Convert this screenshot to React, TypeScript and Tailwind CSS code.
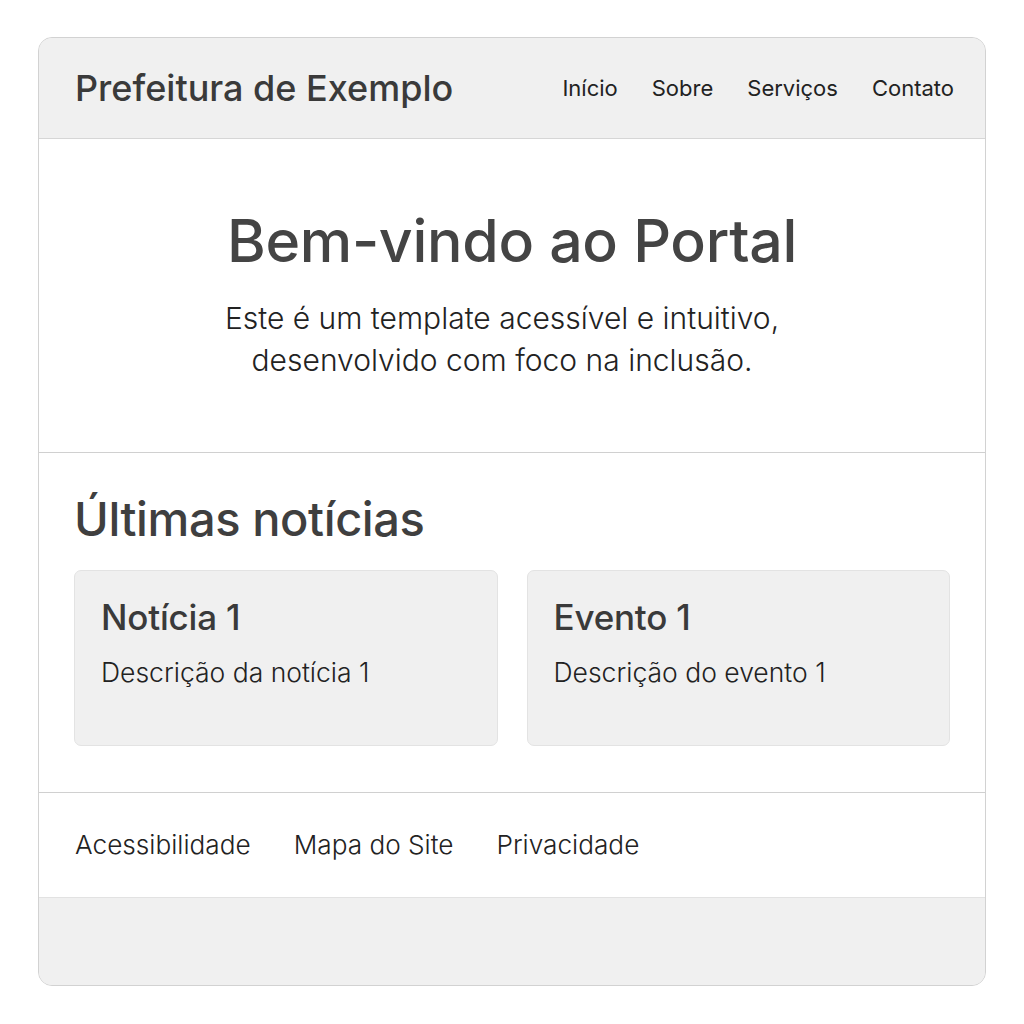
const navLinks = ["Início", "Sobre", "Serviços", "Contato"];

const cards = [
  { title: "Notícia 1", text: "Descrição da notícia 1" },
  { title: "Evento 1", text: "Descrição do evento 1" },
];

const footerLinks = ["Acessibilidade", "Mapa do Site", "Privacidade"];

export default function App() {
  return (
    <div className="min-h-screen bg-white px-[38px] pt-[37px] pb-[38px] font-['Inter',sans-serif]">
      <div className="flex h-[949px] flex-col overflow-hidden rounded-[14px] border border-[#d2d2d2] bg-[#f0f0f0]">
        <header className="flex h-[101px] shrink-0 items-center justify-between border-b border-[#d6d6d6] bg-[#f0f0f0] pl-[36px] pr-[31px]">
          <h1 className="text-[36px] font-medium text-[#3a3a3a]">
            Prefeitura de Exemplo
          </h1>
          <nav>
            <ul className="flex gap-[34px] text-[22px] text-[#222]">
              {navLinks.map((l) => (
                <li key={l}>
                  <a href="#">{l}</a>
                </li>
              ))}
            </ul>
          </nav>
        </header>

        <section className="flex h-[314px] shrink-0 flex-col items-center border-b border-[#d0d0d0] bg-white pt-[66px]">
          <h2 className="text-[59px] font-medium leading-[72px] tracking-[-0.3px] text-[#444]">
            Bem-vindo ao Portal
          </h2>
          <p className="mt-[20px] pr-[20px] text-center text-[30px] font-light leading-[42px] text-[#222]">
            Este é um template acessível e intuitivo,
            <br />
            desenvolvido com foco na inclusão.
          </p>
        </section>

        <section className="flex h-[340px] shrink-0 flex-col border-b border-[#d0d0d0] bg-white px-[35px] pt-[38px]">
          <h2 className="text-[47px] font-medium leading-[56px] tracking-[-0.4px] text-[#3f3f3f]">
            Últimas notícias
          </h2>
          <div className="mt-[23px] grid grid-cols-2 gap-[29px]">
            {cards.map((c) => (
              <div
                key={c.title}
                className="h-[176px] rounded-[7px] border border-[#e3e3e3] bg-[#f0f0f0] px-[26px] pt-[26px]"
              >
                <h3 className="text-[35px] font-medium leading-[40px] tracking-[-0.2px] text-[#3a3a3a]">
                  {c.title}
                </h3>
                <p className="mt-[20px] text-[26.5px] font-light leading-[30px] text-[#222]">
                  {c.text}
                </p>
              </div>
            ))}
          </div>
        </section>

        <footer className="flex h-[105px] shrink-0 items-center border-b border-[#e2e2e2] bg-white px-[36px]">
          <ul className="flex gap-[43px] text-[26.2px] font-light text-[#222]">
            {footerLinks.map((l) => (
              <li key={l}>
                <a href="#">{l}</a>
              </li>
            ))}
          </ul>
        </footer>

        <div className="flex-1 bg-[#f0f0f0]" />
      </div>
    </div>
  );
}
